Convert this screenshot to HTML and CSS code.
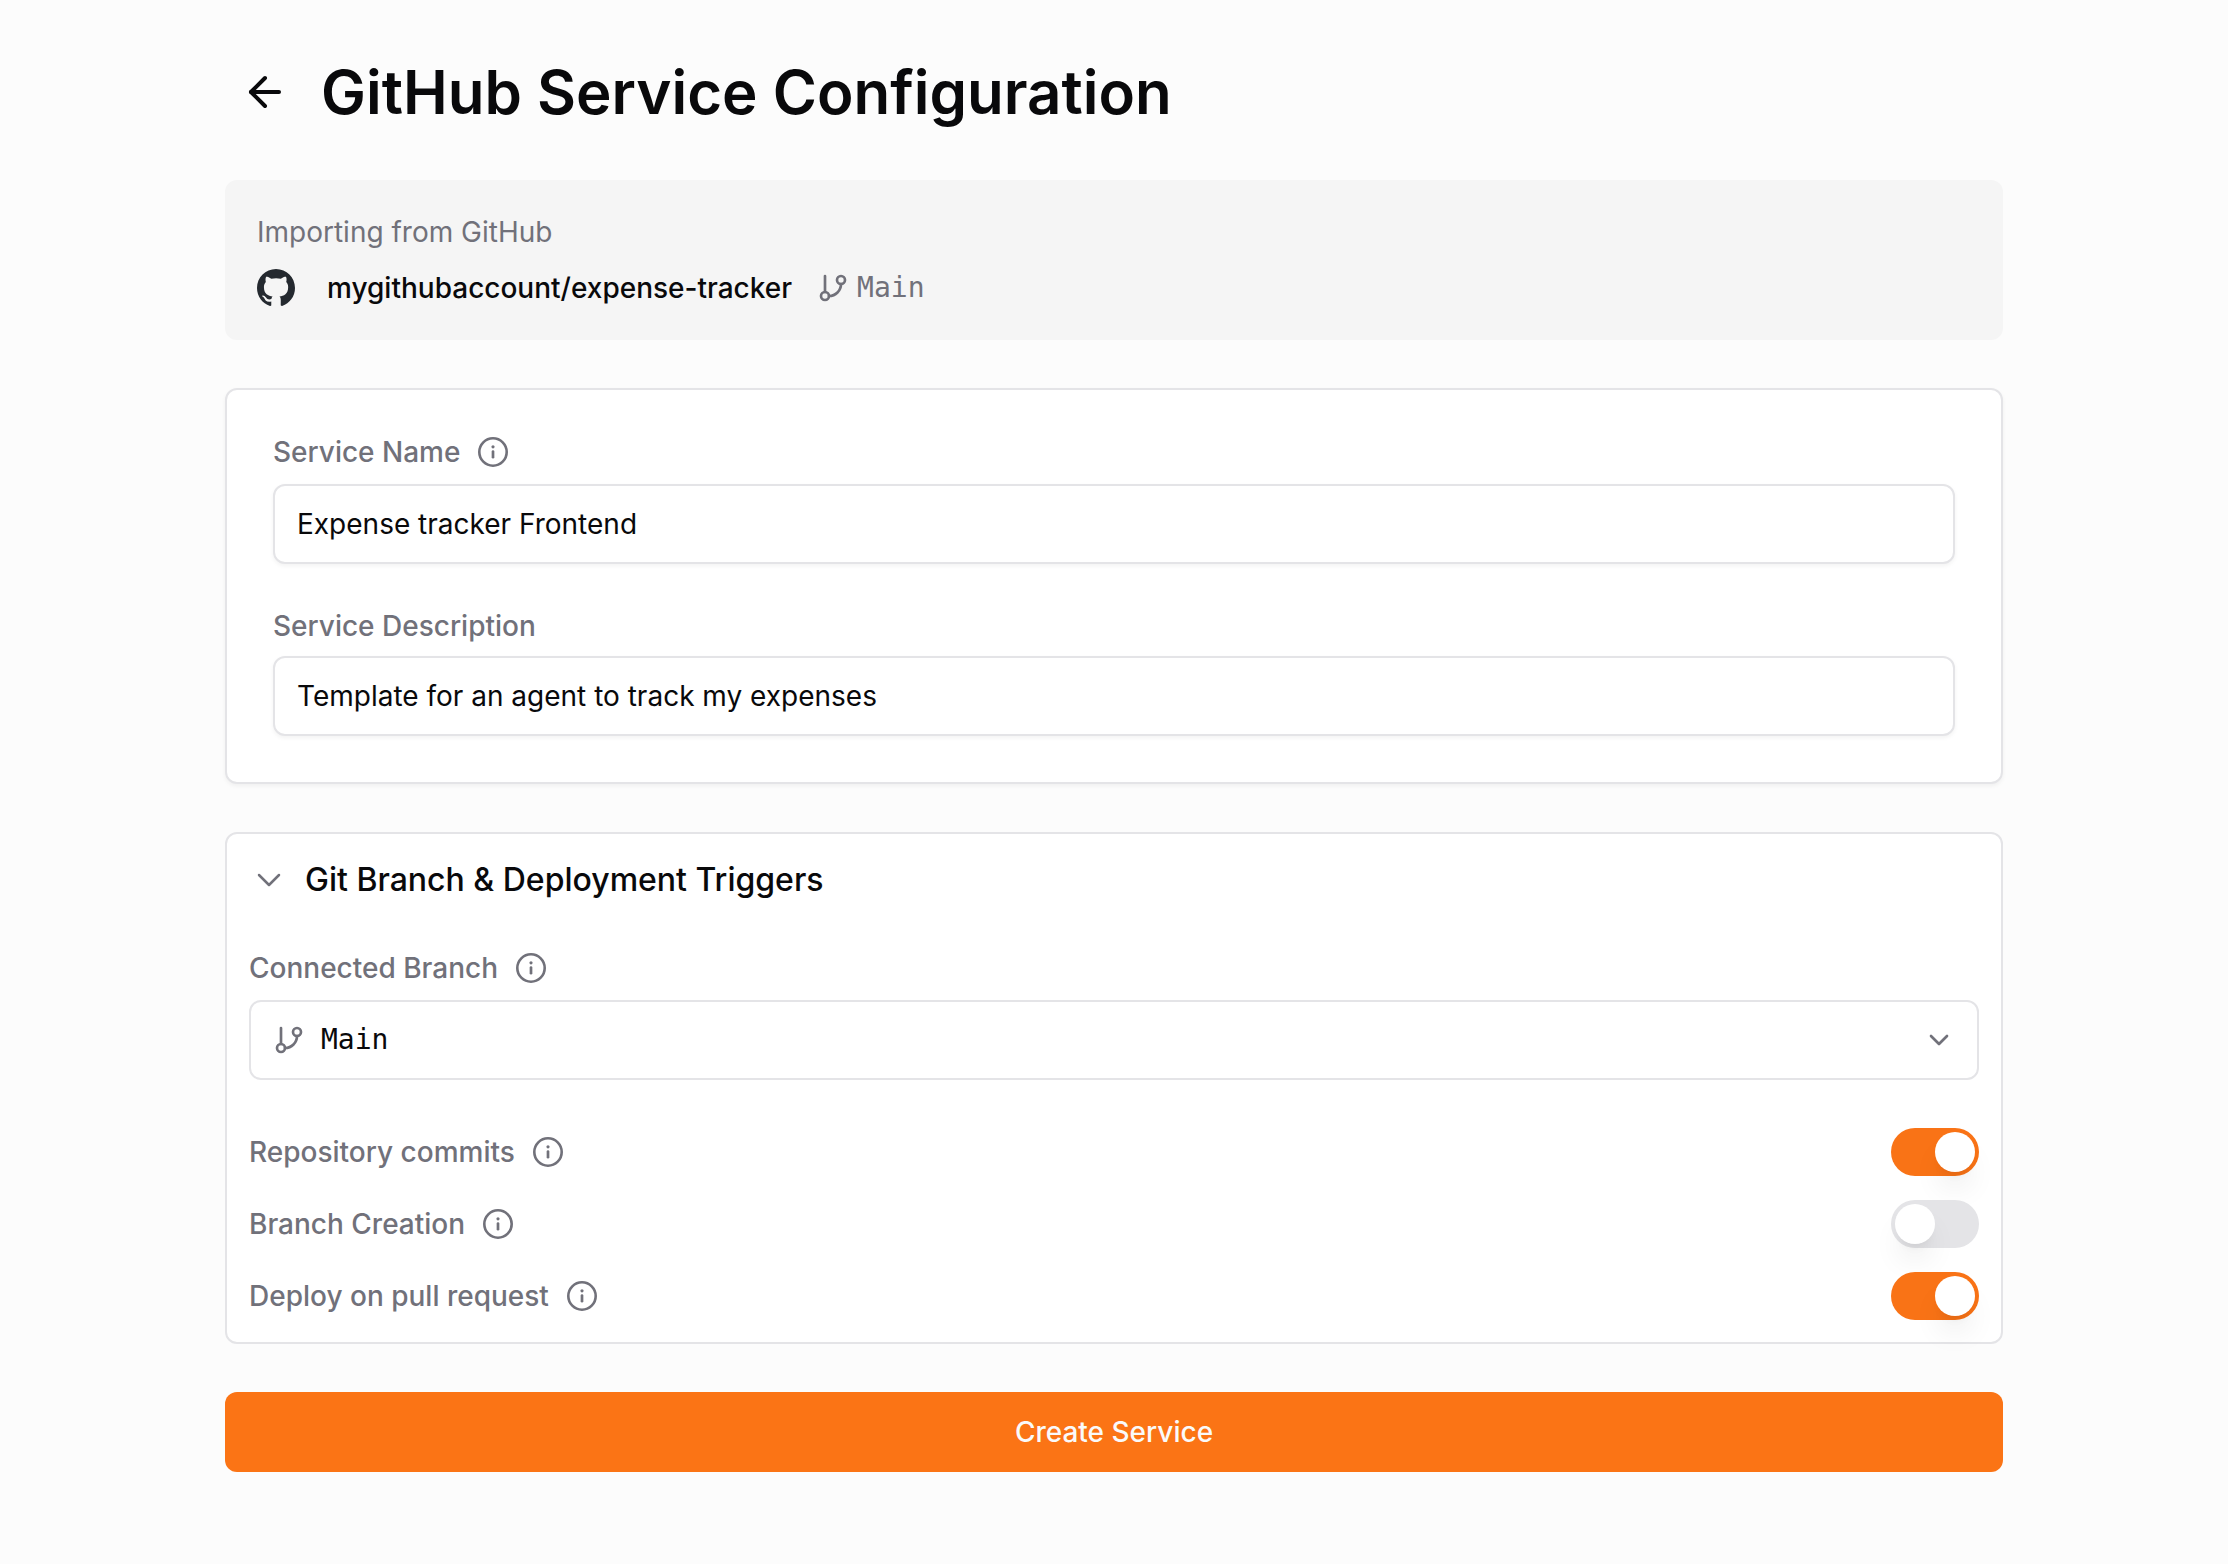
FILE: index.html
```html
<!DOCTYPE html>
<html lang="en">
  <head>
    <meta charset="UTF-8" />
    <meta name="viewport" content="width=device-width, initial-scale=1.0" />
    <title>GitHub Service Configuration</title>
    <link rel="stylesheet" href="styles.css">
  </head>
  <body>
    <!-- shared icons -->
    <svg class="sprite" aria-hidden="true">
      <symbol id="icon-info" viewBox="0 0 32 32">
        <circle cx="16" cy="16" r="13.7" fill="none" stroke="currentColor" stroke-width="2.6" />
        <circle cx="16" cy="10.8" r="1.6" fill="currentColor" />
        <path d="M16 15.6v5.6" fill="none" stroke="currentColor" stroke-width="2.7" stroke-linecap="round" />
      </symbol>
      <symbol id="icon-branch" viewBox="0 0 24 24">
        <g fill="none" stroke="currentColor" stroke-width="2" stroke-linecap="round" stroke-linejoin="round">
          <path d="M6 3v12" />
          <circle cx="18" cy="6" r="3" />
          <circle cx="6" cy="18" r="3" />
          <path d="M18 9a9 9 0 0 1-9 9" />
        </g>
      </symbol>
      <symbol id="icon-chevron" viewBox="0 0 24 24">
        <path d="m6 9 6 6 6-6" fill="none" stroke="currentColor" stroke-linecap="round" stroke-linejoin="round" />
      </symbol>
    </svg>

    <main class="page">
      <header class="page-header">
        <button type="button" class="back" aria-label="Back">
          <svg viewBox="0 0 24 24" fill="none" stroke="currentColor" stroke-width="2" stroke-linecap="round" stroke-linejoin="round">
            <path d="m12 19-7-7 7-7" />
            <path d="M19 12H5" />
          </svg>
        </button>
        <h1>GitHub Service Configuration</h1>
      </header>

      <section class="source">
        <p class="source-title">Importing from GitHub</p>
        <div class="source-repo">
          <svg class="github" viewBox="0 0 16 16" fill="currentColor" aria-hidden="true">
            <path d="M8 0C3.58 0 0 3.58 0 8c0 3.54 2.29 6.53 5.47 7.59.4.07.55-.17.55-.38 0-.19-.01-.82-.01-1.49-2.01.37-2.53-.49-2.69-.94-.09-.23-.48-.94-.82-1.13-.28-.15-.68-.52-.01-.53.63-.01 1.08.58 1.23.82.72 1.21 1.87.87 2.33.66.07-.52.28-.87.51-1.07-1.78-.2-3.64-.89-3.64-3.95 0-.87.31-1.59.82-2.15-.08-.2-.36-1.02.08-2.12 0 0 .67-.21 2.2.82.64-.18 1.32-.27 2-.27s1.36.09 2 .27c1.53-1.04 2.2-.82 2.2-.82.44 1.1.16 1.92.08 2.12.51.56.82 1.27.82 2.15 0 3.07-1.87 3.75-3.65 3.95.29.25.54.73.54 1.48 0 1.07-.01 1.93-.01 2.2 0 .21.15.46.55.38A8.01 8.01 0 0 0 16 8c0-4.42-3.58-8-8-8z" />
          </svg>
          <span class="repo-name">mygithubaccount/expense-tracker</span>
          <span class="repo-branch">
            <svg class="icon"><use href="#icon-branch" /></svg>
            Main
          </span>
        </div>
      </section>

      <form class="form">
        <section class="card details">
          <div class="field">
            <div class="label-row">
              <label for="serviceName">Service Name</label>
              <button type="button" class="info" aria-label="About service name">
                <svg class="icon"><use href="#icon-info" /></svg>
              </button>
            </div>
            <input type="text" id="serviceName" class="control" value="Expense tracker Frontend" />
          </div>
          <div class="field">
            <label for="serviceDescription">Service Description</label>
            <input type="text" id="serviceDescription" class="control" value="Template for an agent to track my expenses" />
          </div>
        </section>

        <section class="card triggers">
          <h2>
            <button type="button" class="collapse" aria-expanded="true">
              <svg><use href="#icon-chevron" /></svg>
              Git Branch &amp; Deployment Triggers
            </button>
          </h2>

          <div class="field">
            <div class="label-row">
              <label for="branch">Connected Branch</label>
              <button type="button" class="info" aria-label="About connected branch">
                <svg class="icon"><use href="#icon-info" /></svg>
              </button>
            </div>
            <div class="select">
              <svg class="icon select-branch"><use href="#icon-branch" /></svg>
              <select id="branch" class="control">
                <option>Main</option>
              </select>
              <svg class="icon select-arrow"><use href="#icon-chevron" /></svg>
            </div>
          </div>

          <div class="switches">
            <div class="switch-row">
              <div class="label-row">
                <label for="commits">Repository commits</label>
                <button type="button" class="info" aria-label="About repository commits">
                  <svg class="icon"><use href="#icon-info" /></svg>
                </button>
              </div>
              <input type="checkbox" role="switch" id="commits" class="switch" checked />
            </div>
            <div class="switch-row">
              <div class="label-row">
                <label for="creation">Branch Creation</label>
                <button type="button" class="info" aria-label="About branch creation">
                  <svg class="icon"><use href="#icon-info" /></svg>
                </button>
              </div>
              <input type="checkbox" role="switch" id="creation" class="switch" />
            </div>
            <div class="switch-row">
              <div class="label-row">
                <label for="pullRequest">Deploy on pull request</label>
                <button type="button" class="info" aria-label="About deploy on pull request">
                  <svg class="icon"><use href="#icon-info" /></svg>
                </button>
              </div>
              <input type="checkbox" role="switch" id="pullRequest" class="switch" checked />
            </div>
          </div>
        </section>

        <button type="submit" class="submit">Create Service</button>
      </form>
    </main>
  </body>
</html>
```

FILE: styles.css
```css
* {
  box-sizing: border-box;
}

body {
  margin: 0;
  background-color: #fcfcfc;
  color: #09090b;
  font-family: Inter, "Liberation Sans", sans-serif;
  font-size: 28px;
  line-height: 40px;
}

h1,
h2,
p {
  margin: 0;
}

button {
  padding: 0;
  border: none;
  background: none;
  color: inherit;
  font: inherit;
  cursor: pointer;
}

svg {
  display: block;
  flex-shrink: 0;
}

.sprite {
  position: absolute;
  width: 0;
  height: 0;
}

.icon {
  width: 32px;
  height: 32px;
}

.page {
  width: 80%;
  max-width: 1778px;
  margin: 0 auto;
  padding: 52px 0;
}

.page-header {
  display: flex;
  align-items: center;
  gap: 16px;
  margin-bottom: 48px;
}

.back {
  display: flex;
  align-items: center;
  justify-content: center;
  width: 80px;
  height: 80px;
}

.back svg {
  width: 48px;
  height: 48px;
}

h1 {
  font-size: 60px;
  font-weight: 600;
  line-height: 80px;
}

.source {
  display: flex;
  flex-direction: column;
  gap: 16px;
  margin-bottom: 48px;
  padding: 32px;
  border-radius: 12px;
  background-color: #f5f5f5;
}

.source-title {
  color: #71717a;
}

.source-repo {
  display: flex;
  align-items: center;
}

.github {
  width: 38px;
  height: 38px;
  margin-right: 32px;
  color: #24292f;
}

.repo-name {
  margin-right: 25px;
  font-weight: 500;
}

.repo-branch {
  display: flex;
  align-items: center;
  gap: 8px;
  color: #71717a;
  font-family: "DejaVu Sans Mono", monospace;
}

.form {
  display: flex;
  flex-direction: column;
  gap: 48px;
}

.card {
  display: flex;
  flex-direction: column;
  gap: 48px;
  border: 2px solid #e4e4e7;
  border-radius: 12px;
  background-color: #fff;
}

.details {
  padding: 46px;
  box-shadow: 0 2px 4px rgba(0, 0, 0, 0.05);
}

.triggers {
  padding: 22px;
}

.field {
  display: flex;
  flex-direction: column;
  gap: 16px;
}

.label-row {
  display: flex;
  align-items: center;
  gap: 17px;
}

label {
  color: #71717a;
  font-weight: 500;
  line-height: 28px;
}

.info {
  color: #71717a;
}

.control {
  width: 100%;
  height: 80px;
  padding: 0 22px;
  border: 2px solid #e4e4e7;
  border-radius: 12px;
  background-color: #fff;
  color: inherit;
  font: inherit;
}

.details .control {
  box-shadow: 0 2px 4px rgba(0, 0, 0, 0.05);
}

h2 {
  font-size: 32px;
  font-weight: 500;
  line-height: 48px;
}

.collapse {
  display: flex;
  align-items: center;
  gap: 16px;
}

.collapse svg {
  width: 40px;
  height: 40px;
  color: #71717a;
  stroke-width: 1.5;
}

/* native select with icons laid over both ends */
.select {
  position: relative;
  color: #71717a;
}

.select .control {
  padding: 0 70px;
  appearance: none;
  color: #09090b;
  font-family: "DejaVu Sans Mono", monospace;
}

.select .icon {
  position: absolute;
  top: 24px;
  pointer-events: none;
}

.select-branch {
  left: 24px;
}

.select-arrow {
  right: 24px;
  stroke-width: 2;
}

.switches {
  display: flex;
  flex-direction: column;
  gap: 24px;
}

.switch-row {
  display: flex;
  align-items: center;
  justify-content: space-between;
}

.switch {
  display: flex;
  width: 88px;
  height: 48px;
  margin: 0;
  padding: 4px;
  border-radius: 24px;
  appearance: none;
  background-color: #e4e4e7;
  cursor: pointer;
}

.switch::before {
  content: "";
  width: 40px;
  height: 40px;
  border-radius: 50%;
  background-color: #fff;
  box-shadow: 0 20px 30px -6px rgba(0, 0, 0, 0.1), 0 8px 12px -8px rgba(0, 0, 0, 0.1);
}

.switch:checked {
  justify-content: flex-end;
  background-color: #f97316;
}

.submit {
  height: 80px;
  border-radius: 12px;
  background-color: #fb7415;
  color: #fafafa;
  font-weight: 500;
}
```
